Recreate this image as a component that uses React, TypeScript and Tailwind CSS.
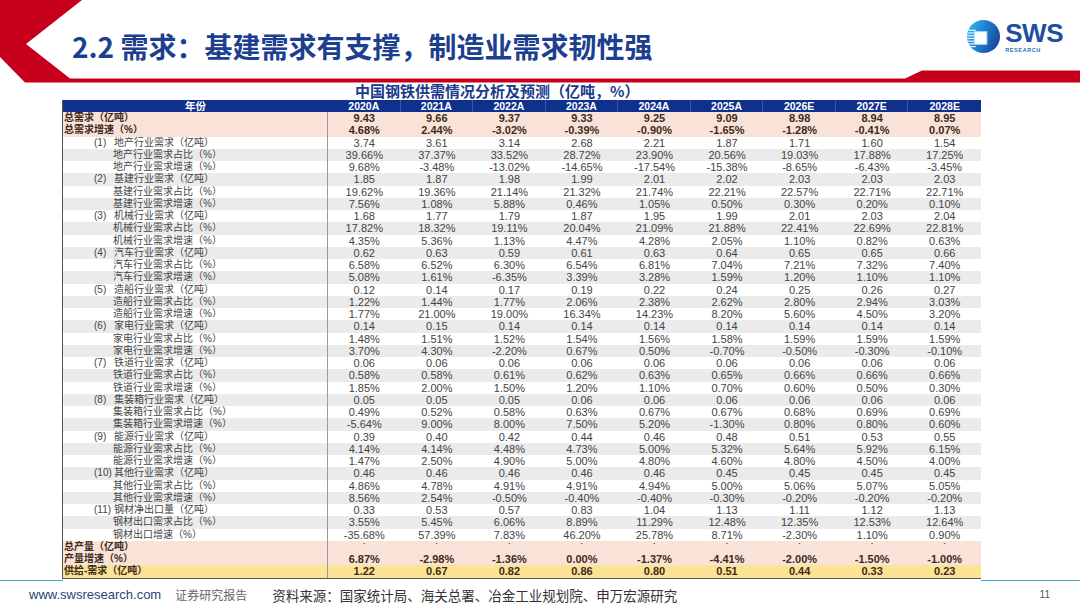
import React from 'react';

type Kind = 'total' | 'group' | 'sub' | 'yellow';

interface Row {
  label: string;
  num?: string;
  kind: Kind;
  values: string[];
}

const years = ['2020A', '2021A', '2022A', '2023A', '2024A', '2025A', '2026E', '2027E', '2028E'];

const v = (s: string) => s.split(' ');

const rows: Row[] = [
  { label: '总需求（亿吨）', kind: 'total', values: v('9.43 9.66 9.37 9.33 9.25 9.09 8.98 8.94 8.95') },
  { label: '总需求增速（%）', kind: 'total', values: v('4.68% 2.44% -3.02% -0.39% -0.90% -1.65% -1.28% -0.41% 0.07%') },
  { num: '(1)', label: '地产行业需求（亿吨）', kind: 'group', values: v('3.74 3.61 3.14 2.68 2.21 1.87 1.71 1.60 1.54') },
  { label: '地产行业需求占比（%）', kind: 'sub', values: v('39.66% 37.37% 33.52% 28.72% 23.90% 20.56% 19.03% 17.88% 17.25%') },
  { label: '地产行业需求增速（%）', kind: 'sub', values: v('9.68% -3.48% -13.02% -14.65% -17.54% -15.38% -8.65% -6.43% -3.45%') },
  { num: '(2)', label: '基建行业需求（亿吨）', kind: 'group', values: v('1.85 1.87 1.98 1.99 2.01 2.02 2.03 2.03 2.03') },
  { label: '基建行业需求占比（%）', kind: 'sub', values: v('19.62% 19.36% 21.14% 21.32% 21.74% 22.21% 22.57% 22.71% 22.71%') },
  { label: '基建行业需求增速（%）', kind: 'sub', values: v('7.56% 1.08% 5.88% 0.46% 1.05% 0.50% 0.30% 0.20% 0.10%') },
  { num: '(3)', label: '机械行业需求（亿吨）', kind: 'group', values: v('1.68 1.77 1.79 1.87 1.95 1.99 2.01 2.03 2.04') },
  { label: '机械行业需求占比（%）', kind: 'sub', values: v('17.82% 18.32% 19.11% 20.04% 21.09% 21.88% 22.41% 22.69% 22.81%') },
  { label: '机械行业需求增速（%）', kind: 'sub', values: v('4.35% 5.36% 1.13% 4.47% 4.28% 2.05% 1.10% 0.82% 0.63%') },
  { num: '(4)', label: '汽车行业需求（亿吨）', kind: 'group', values: v('0.62 0.63 0.59 0.61 0.63 0.64 0.65 0.65 0.66') },
  { label: '汽车行业需求占比（%）', kind: 'sub', values: v('6.58% 6.52% 6.30% 6.54% 6.81% 7.04% 7.21% 7.32% 7.40%') },
  { label: '汽车行业需求增速（%）', kind: 'sub', values: v('5.08% 1.61% -6.35% 3.39% 3.28% 1.59% 1.20% 1.10% 1.10%') },
  { num: '(5)', label: '造船行业需求（亿吨）', kind: 'group', values: v('0.12 0.14 0.17 0.19 0.22 0.24 0.25 0.26 0.27') },
  { label: '造船行业需求占比（%）', kind: 'sub', values: v('1.22% 1.44% 1.77% 2.06% 2.38% 2.62% 2.80% 2.94% 3.03%') },
  { label: '造船行业需求增速（%）', kind: 'sub', values: v('1.77% 21.00% 19.00% 16.34% 14.23% 8.20% 5.60% 4.50% 3.20%') },
  { num: '(6)', label: '家电行业需求（亿吨）', kind: 'group', values: v('0.14 0.15 0.14 0.14 0.14 0.14 0.14 0.14 0.14') },
  { label: '家电行业需求占比（%）', kind: 'sub', values: v('1.48% 1.51% 1.52% 1.54% 1.56% 1.58% 1.59% 1.59% 1.59%') },
  { label: '家电行业需求增速（%）', kind: 'sub', values: v('3.70% 4.30% -2.20% 0.67% 0.50% -0.70% -0.50% -0.30% -0.10%') },
  { num: '(7)', label: '铁道行业需求（亿吨）', kind: 'group', values: v('0.06 0.06 0.06 0.06 0.06 0.06 0.06 0.06 0.06') },
  { label: '铁道行业需求占比（%）', kind: 'sub', values: v('0.58% 0.58% 0.61% 0.62% 0.63% 0.65% 0.66% 0.66% 0.66%') },
  { label: '铁道行业需求增速（%）', kind: 'sub', values: v('1.85% 2.00% 1.50% 1.20% 1.10% 0.70% 0.60% 0.50% 0.30%') },
  { num: '(8)', label: '集装箱行业需求（亿吨）', kind: 'group', values: v('0.05 0.05 0.05 0.06 0.06 0.06 0.06 0.06 0.06') },
  { label: '集装箱行业需求占比（%）', kind: 'sub', values: v('0.49% 0.52% 0.58% 0.63% 0.67% 0.67% 0.68% 0.69% 0.69%') },
  { label: '集装箱行业需求增速（%）', kind: 'sub', values: v('-5.64% 9.00% 8.00% 7.50% 5.20% -1.30% 0.80% 0.80% 0.60%') },
  { num: '(9)', label: '能源行业需求（亿吨）', kind: 'group', values: v('0.39 0.40 0.42 0.44 0.46 0.48 0.51 0.53 0.55') },
  { label: '能源行业需求占比（%）', kind: 'sub', values: v('4.14% 4.14% 4.48% 4.73% 5.00% 5.32% 5.64% 5.92% 6.15%') },
  { label: '能源行业需求增速（%）', kind: 'sub', values: v('1.47% 2.50% 4.90% 5.00% 4.80% 4.60% 4.80% 4.50% 4.00%') },
  { num: '(10)', label: '其他行业需求（亿吨）', kind: 'group', values: v('0.46 0.46 0.46 0.46 0.46 0.45 0.45 0.45 0.45') },
  { label: '其他行业需求占比（%）', kind: 'sub', values: v('4.86% 4.78% 4.91% 4.91% 4.94% 5.00% 5.06% 5.07% 5.05%') },
  { label: '其他行业需求增速（%）', kind: 'sub', values: v('8.56% 2.54% -0.50% -0.40% -0.40% -0.30% -0.20% -0.20% -0.20%') },
  { num: '(11)', label: '钢材净出口量（亿吨）', kind: 'group', values: v('0.33 0.53 0.57 0.83 1.04 1.13 1.11 1.12 1.13') },
  { label: '钢材出口需求占比（%）', kind: 'sub', values: v('3.55% 5.45% 6.06% 8.89% 11.29% 12.48% 12.35% 12.53% 12.64%') },
  { label: '钢材出口增速（%）', kind: 'sub', values: v('-35.68% 57.39% 7.83% 46.20% 25.78% 8.71% -2.30% 1.10% 0.90%') },
  { label: '总产量（亿吨）', kind: 'total', values: v('- - - - - - - - -') },
  { label: '产量增速（%）', kind: 'total', values: v('6.87% -2.98% -1.36% 0.00% -1.37% -4.41% -2.00% -1.50% -1.00%') },
  { label: '供给-需求（亿吨）', kind: 'yellow', values: v('1.22 0.67 0.82 0.86 0.80 0.51 0.44 0.33 0.23') },
];

function Logo() {
  return (
    <div className="flex items-start gap-[4px]">
      <svg width="35" height="35" viewBox="0 0 36 36">
        <defs>
          <linearGradient id="swsGrad" x1="0" y1="0" x2="1" y2="0.4">
            <stop offset="0" stopColor="#3cbcf0" />
            <stop offset="0.5" stopColor="#1f86d4" />
            <stop offset="1" stopColor="#1a4ea2" />
          </linearGradient>
          <clipPath id="swsClip">
            <circle cx="18" cy="18" r="17" />
          </clipPath>
        </defs>
        <circle cx="18" cy="18" r="17" fill="url(#swsGrad)" />
        <g clipPath="url(#swsClip)">
          {[11, 13.8, 16.6, 19.4, 22.2, 25, 27.8].map(y => (
            <rect key={y} x="0" y={y} width="10" height="1.2" fill="#ffffff" opacity="0.9" />
          ))}
        </g>
        <rect x="8.5" y="13" width="13" height="13" fill="#ffffff" stroke="#a9dcf5" strokeWidth="1" />
      </svg>
      <div className="flex flex-col pt-[4px]">
        <span className="font-['Liberation_Sans',sans-serif] text-[26px] font-bold leading-[21px] tracking-[-0.5px] text-[#1c4f9f]">
          SWS
        </span>
        <span className="mt-[3px] font-['Liberation_Sans',sans-serif] text-[5.5px] font-bold leading-[6px] tracking-[0.6px] text-[#2373bd]">
          RESEARCH
        </span>
      </div>
    </div>
  );
}

function HeaderDecor() {
  return (
    <svg className="pointer-events-none absolute left-0 top-0" width="1080" height="90" viewBox="0 0 1080 90">
      <polygon
        points="0,0 82,0 26,44 70,78.5 905,78.5 922,70.5 1080,70.5 1080,82.5 25,82.5 0,57"
        fill="#c6001c"
      />
    </svg>
  );
}

function rowBg(row: Row, i: number) {
  if (row.kind === 'total') return 'bg-[#f9e3d8] font-bold text-[#3b2b20]';
  if (row.kind === 'yellow') return 'bg-[#fce396] font-bold text-[#3b2b20]';
  return i % 2 === 1 ? 'bg-[#ebebeb] text-[#444]' : 'bg-white text-[#444]';
}

function DataTable() {
  let mid = -1;
  return (
    <div className="ml-[62px] w-[919px] border-b border-l border-[#555]">
      <div className="grid h-[12px] grid-cols-[265px_repeat(9,1fr)] bg-[#10308d] font-['Liberation_Sans','Noto_Sans_CJK_SC',sans-serif] text-[10.5px] font-bold leading-[12px] text-white">
        <div className="text-center">年份</div>
        {years.map((y, i) => (
          <div key={y} className={`text-center ${i < 8 ? 'border-r border-[#3456ad]' : ''}`}>
            {y}
          </div>
        ))}
      </div>
      {rows.map(row => {
        if (row.kind === 'group' || row.kind === 'sub') mid += 1;
        const cls = rowBg(row, mid);
        return (
          <div key={row.label} className={`grid h-[12.26px] grid-cols-[265px_repeat(9,1fr)] ${cls}`}>
            <div
              className={`flex items-center border-r border-[#9a9a9a] font-['Liberation_Sans','Noto_Sans_CJK_SC',sans-serif] text-[10px] leading-[12px] ${
                row.kind === 'group' ? 'pl-[31px]' : row.kind === 'sub' ? 'pl-[50px]' : 'pl-[1px]'
              }`}
            >
              {row.num && <span className="w-[20px] shrink-0">{row.num}</span>}
              {row.label}
            </div>
            {row.values.map((val, j) =>
              val === '-' ? (
                <div key={j} className="flex justify-center font-['Liberation_Sans',sans-serif] text-[7px] leading-[6px]">
                  ·
                </div>
              ) : (
                <div
                  key={j}
                  className="text-center font-['Liberation_Sans_Narrow','Liberation_Sans',sans-serif] text-[11px] leading-[12px]"
                >
                  {val}
                </div>
              ),
            )}
          </div>
        );
      })}
    </div>
  );
}

export default function App() {
  return (
    <div className="relative h-[607px] w-[1080px] overflow-hidden bg-white">
      <div className="relative h-[82px]">
        <HeaderDecor />
        <div className="relative flex items-start justify-between pr-[17px]">
          <h1 className="pl-[72px] pt-[31px] font-['Noto_Sans_CJK_SC',sans-serif] text-[28px] font-bold leading-[30px] text-[#1d3f8f]">
            2.2 需求：基建需求有支撑，制造业需求韧性强
          </h1>
          <div className="pt-[19px]">
            <Logo />
          </div>
        </div>
      </div>

      <div className="h-[18px] pl-[355px] font-['Noto_Sans_CJK_SC',sans-serif] text-[15px] font-bold leading-[18px] text-[#1a3a8c]">
        中国钢铁供需情况分析及预测（亿吨，%）
      </div>

      <DataTable />

      <div className="flex items-start justify-between">
        <div className="mt-[1px] h-px w-[63px] bg-[#4ba6cc]" />
        <div className="mt-[1px] h-px w-[99px] bg-[#4ba6cc]" />
      </div>

      <div className="flex items-center pt-[5px] leading-[18px]">
        <span className="pl-[29px] font-['Liberation_Sans',sans-serif] text-[13px] text-[#24467c]">www.swsresearch.com</span>
        <span className="pl-[14px] font-['Noto_Sans_CJK_SC',sans-serif] text-[12px] text-[#666]">证券研究报告</span>
        <span className="pl-[25px] font-['Noto_Sans_CJK_SC',sans-serif] text-[13.5px] text-[#333]">
          资料来源：国家统计局、海关总署、冶金工业规划院、申万宏源研究
        </span>
        <span className="ml-auto pr-[30px] font-['Liberation_Sans',sans-serif] text-[10px] text-[#555]">11</span>
      </div>
    </div>
  );
}
